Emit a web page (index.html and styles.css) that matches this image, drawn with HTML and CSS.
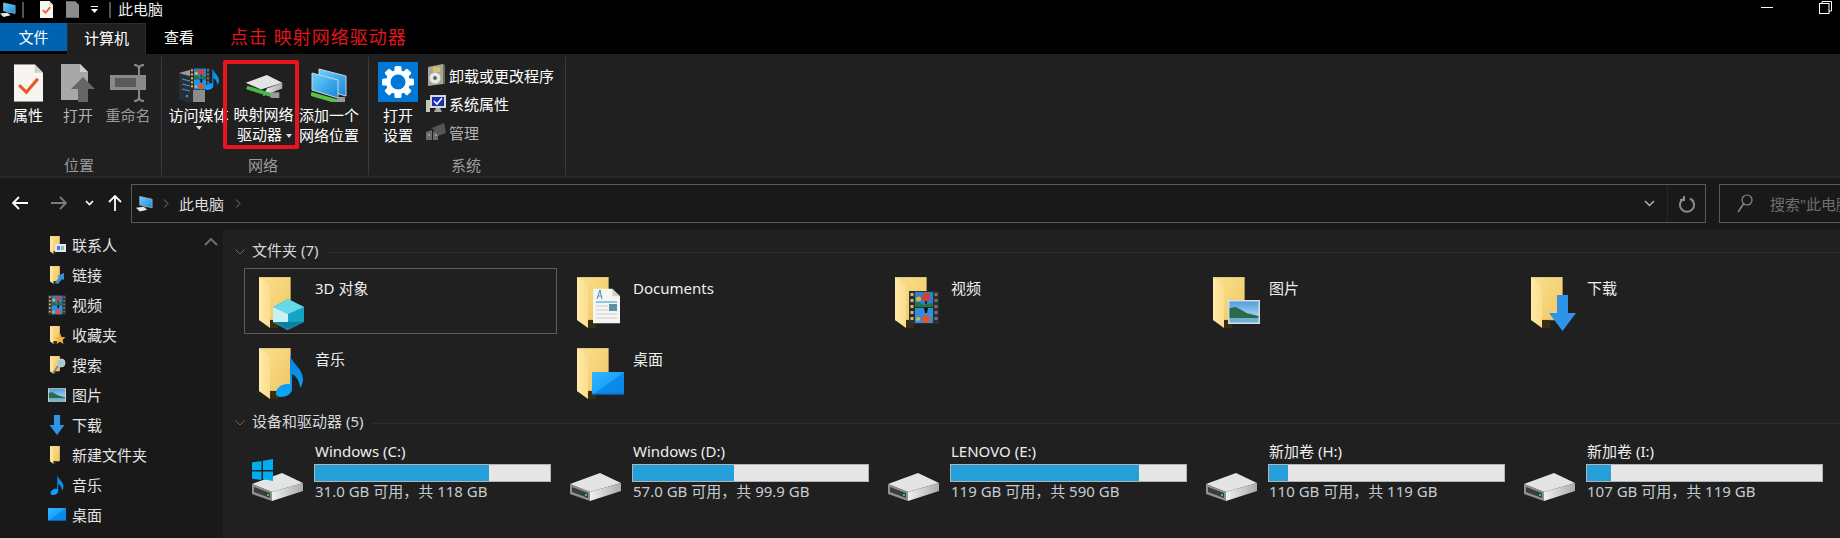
FILE: index.html
```html
<!DOCTYPE html>
<html lang="zh-CN">
<head>
<meta charset="utf-8">
<title>此电脑</title>
<link rel="stylesheet" href="styles.css">
</head>
<body>
<svg class="defs" aria-hidden="true">
  <defs>
    <linearGradient id="gBack" x1="0" x2="1" y1="0" y2="1"><stop offset="0" stop-color="#fbe08f"/><stop offset="1" stop-color="#efc765"/></linearGradient>
    <linearGradient id="gFlap" x1="0" x2="1"><stop offset="0" stop-color="#ffeaa8"/><stop offset="1" stop-color="#fbdd8c"/></linearGradient>
    <linearGradient id="gNote" x1="0" x2="0" y1="0" y2="1"><stop offset="0" stop-color="#0b7fd8"/><stop offset="1" stop-color="#0aa6ff"/></linearGradient>
    <linearGradient id="gSky" x1="0" x2="0" y1="0" y2="1"><stop offset="0" stop-color="#4d9fe0"/><stop offset="1" stop-color="#cfe7f7"/></linearGradient>
    <linearGradient id="gDesk" x1="0" x2="1" y1="0" y2="1"><stop offset="0" stop-color="#35b4ff"/><stop offset=".5" stop-color="#1ba4fb"/><stop offset=".51" stop-color="#0a8cec"/><stop offset="1" stop-color="#0a84e0"/></linearGradient>
    <linearGradient id="gScreen" x1="0" x2="1" y1="0" y2="1"><stop offset="0" stop-color="#6fd0ff"/><stop offset="1" stop-color="#1689d6"/></linearGradient>
    <linearGradient id="gSide" x1="0" x2="1"><stop offset="0" stop-color="#f0f0f0"/><stop offset="1" stop-color="#a9abad"/></linearGradient>

    <symbol id="folder" viewBox="0 0 32 51">
      <rect x="0" y="0" width="31.5" height="43" fill="url(#gBack)" stroke="#b89a5c" stroke-width=".6"/>
      <path d="M11 43h8v8h-8z" fill="#3a2c10"/>
      <path d="M0 0l11 8v43L0 43z" fill="url(#gFlap)"/>
    </symbol>

    <symbol id="drive" viewBox="0 0 52 28">
      <path d="M0 11L30 0l21 10-31 9z" fill="#e3e4e6"/>
      <path d="M0 11l20 8v9L0 21z" fill="#8f9092"/>
      <path d="M2 14l16 6v5L2 19z" fill="#3b3c3e"/>
      <path d="M20 19l31-9v8L20 28z" fill="url(#gSide)"/>
      <rect x="15" y="21" width="2" height="2" fill="#1fd655"/>
    </symbol>

    <symbol id="film" viewBox="0 0 30 33">
      <rect width="30" height="33" fill="#2f2f2f"/>
      <g fill="#d9b46a"><rect x="1.5" y="2" width="3" height="3"/><rect x="1.5" y="8" width="3" height="3"/><rect x="1.5" y="14" width="3" height="3"/><rect x="1.5" y="20" width="3" height="3"/><rect x="1.5" y="26" width="3" height="3"/></g>
      <g fill="#777"><rect x="25.5" y="2" width="3" height="3"/><rect x="25.5" y="8" width="3" height="3"/><rect x="25.5" y="14" width="3" height="3"/><rect x="25.5" y="20" width="3" height="3"/><rect x="25.5" y="26" width="3" height="3"/></g>
      <rect x="6" y="1" width="18" height="15" fill="#2f7fd0"/>
      <rect x="6" y="17" width="18" height="15" fill="#2f8fe0"/>
      <path d="M6 16v-4l4-1 4 3 10-2v4z" fill="#1d7a3a"/>
      <circle cx="17" cy="6" r="4" fill="#d8402c"/><rect x="16" y="10" width="2" height="3" fill="#222"/><circle cx="9.500" cy="8" r="2.500" fill="#e8b030"/>
      <circle cx="17" cy="28" r="4" fill="#e0562c"/><path d="M15 17h4l-1 5h-2z" fill="#111"/><circle cx="9" cy="28" r="2" fill="#e8b030"/>
    </symbol>

    <symbol id="pic" viewBox="0 0 32 24">
      <rect width="32" height="24" fill="#d8dde0"/>
      <rect x="1.5" y="1.5" width="29" height="21" fill="url(#gSky)"/>
      <path d="M1.5 16V8l6-1 6 3 5 3 12 3v2h-29z" fill="#2c6b4a"/>
      <rect x="1.5" y="18" width="29" height="4.5" fill="#6fb1d6"/>
    </symbol>

    <symbol id="note" viewBox="0 0 27 42">
      <path d="M14 0c1 7 13 14 13 24 0 3-1 6-3 9 0-7-4-12-8-14v15c0 5-6 8-11 8-3 0-5-1-5-4 0-5 6-9 11-9 1 0 2 0 3 .5z" fill="url(#gNote)"/>
    </symbol>

    <symbol id="arrowDown" viewBox="0 0 27 36">
      <path d="M8 0h11v18h8L13.500 36 0 18h8z" fill="#2f93e8"/>
    </symbol>

    <symbol id="deskp" viewBox="0 0 32 23">
      <rect width="32" height="23" fill="url(#gDesk)"/>
      <rect y="21.500" width="32" height="1.500" fill="#0660b0"/>
    </symbol>

    <symbol id="netpc" viewBox="0 0 20 18">
      <path d="M5 1l13 3v9L5 10z" fill="url(#gScreen)" stroke="#9fb4c4" stroke-width=".8"/>
      <path d="M1 13l8-1 4 3-8 2z" fill="#e8e8e8"/>
      <path d="M9 10l3 1v2l-3-1z" fill="#8a8a8a"/>
    </symbol>

    <symbol id="page" viewBox="0 0 28 36">
      <path d="M0 0h20l8 8v28H0z" fill="#f7f5ef"/>
      <path d="M20 0v8h8z" fill="#cfcfcf"/>
    </symbol>
  </defs>
</svg>

<div class="window">
  <header class="titlebar">
    <svg class="t-pc" width="18" height="16"><use href="#netpc"/></svg>
    <span class="t-sep"></span>
    <svg class="t-doc" width="15" height="17" viewBox="0 0 28 36"><use href="#page" width="28" height="36"/><path d="M6 19l6 6 10-12" fill="none" stroke="#e8562a" stroke-width="3.500"/></svg>
    <svg class="t-doc2" width="13" height="17" viewBox="0 0 28 36"><path d="M0 0h20l8 8v28H0z" fill="#8c8c8c"/></svg>
    <svg class="t-drop" width="9" height="8" viewBox="0 0 9 8"><path d="M1 0h7v1H1zM1 3h7L4.500 7z" fill="#fff"/></svg>
    <span class="t-sep t-sep2"></span>
    <span class="t-title">此电脑</span>
    <span class="t-controls">
      <i class="t-min"></i>
      <svg width="13" height="13" viewBox="0 0 13 13"><path d="M3 2V.5h9.500V10H10" fill="none" stroke="#fff"/><rect x=".5" y="2.500" width="9.500" height="10" fill="none" stroke="#fff"/></svg>
    </span>
  </header>

  <nav class="tabs">
    <span class="tab tab-file">文件</span>
    <span class="tab tab-active">计算机</span>
    <span class="tab tab-view">查看</span>
    <span class="tab-note">点击 映射网络驱动器</span>
  </nav>

  <section class="ribbon">
    <div class="group g-loc">
      <div class="g-body">
        <div class="rbtn w50">
          <svg class="ric" width="29" height="37" viewBox="0 0 28 36"><use href="#page" width="28" height="36"/><path d="M5 20l7 7 11-13" fill="none" stroke="#e8562a" stroke-width="3"/></svg>
          <span>属性</span>
        </div>
        <div class="rbtn w50 dim">
          <svg class="ric" width="34" height="38" viewBox="0 0 34 38"><path d="M0 0h19l8 8v28H0z" fill="#a8a8a8"/><path d="M19 0v8h8z" fill="#d0d0d0"/><path d="M22 13l12 12h-7v13H17V25h-7z" fill="#666"/></svg>
          <span>打开</span>
        </div>
        <div class="rbtn w50 dim2">
          <svg class="ric" width="36" height="38" viewBox="0 0 36 38"><rect y="11" width="36" height="15" fill="#8a8a8a"/><rect x="5" y="14" width="21" height="9" fill="#5a5a5a"/><path d="M24 1c3 0 5 1 5 4v28c0 3 2 4 5 4M34 1c-3 0-5 1-5 4" fill="none" stroke="#888" stroke-width="2"/><path d="M29 33c0 3-2 4-5 4" fill="none" stroke="#888" stroke-width="2"/></svg>
          <span>重命名</span>
        </div>
      </div>
      <div class="g-label">位置</div>
    </div>

    <div class="group g-net">
      <div class="g-body">
        <div class="rbtn w61">
          <svg class="ric" width="40" height="38" viewBox="0 0 40 38"><path d="M0 9l14-4 12 4v29H8l-8-3z" fill="#2a2d33"/><path d="M0 9l14-4 12 4-12 4z" fill="#9a9ca0"/><path d="M14 13l12-4v29H14z" fill="#8a8c90"/><path d="M3 15l8 2M3 20l8 2M3 25l8 2" stroke="#3aa0e0" stroke-width="1.200"/><circle cx="8" cy="32" r="1.200" fill="#3aa0e0"/><svg x="11" y="0" width="20" height="30"><use href="#film"/></svg><svg x="26" y="2" width="14" height="26"><use href="#note"/></svg></svg>
          <span>访问媒体</span>
          <i class="caret caret-down"></i>
        </div>
        <div class="rbtn w65 map">
          <svg class="ric ric-map" width="38" height="25" viewBox="0 0 38 25"><path d="M0 8L22 0l16 8-22 7z" fill="#e3e4e6"/><path d="M22 14l16-6v6l-20 8z" fill="url(#gSide)"/><path d="M2 12l14 3v4L2 15z" fill="#3b3c3e"/><path d="M1 13l26 8" stroke="#48b848" stroke-width="4"/><rect x="26" y="18" width="9" height="6" fill="#9a9a9a"/></svg>
          <span>映射网络</span>
          <span class="with-caret">驱动器<i class="caret caret-inline"></i></span>
          <i class="redbox"></i>
        </div>
        <div class="rbtn w64">
          <svg class="ric ric-add" width="36" height="34" viewBox="0 0 36 34"><path d="M8 1l27 7v20L8 20z" fill="url(#gScreen)" stroke="#c8d8e0"/><path d="M1 5l26 7v18L1 22z" fill="url(#gScreen)" stroke="#c8d8e0"/><path d="M0 26l28 8" stroke="#5cc04a" stroke-width="4"/><rect x="26" y="29" width="8" height="5" fill="#999"/></svg>
          <span>添加一个</span>
          <span>网络位置</span>
        </div>
      </div>
      <div class="g-label">网络</div>
    </div>

    <div class="group g-sys">
      <div class="g-body">
        <div class="rbtn w50 settings">
          <svg class="ric ric-set" width="40" height="40" viewBox="0 0 40 40">
            <rect width="40" height="40" fill="#0078d7"/>
            <g fill="#fff">
              <rect x="16.500" y="4" width="7" height="32" rx="1.500"/>
              <rect x="16.500" y="4" width="7" height="32" rx="1.500" transform="rotate(45 20 20)"/>
              <rect x="16.500" y="4" width="7" height="32" rx="1.500" transform="rotate(90 20 20)"/>
              <rect x="16.500" y="4" width="7" height="32" rx="1.500" transform="rotate(135 20 20)"/>
            </g>
            <circle cx="20" cy="20" r="9.500" fill="none" stroke="#fff" stroke-width="5"/>
            <circle cx="20" cy="20" r="7.500" fill="#0078d7"/>
          </svg>
          <span>打开</span>
          <span>设置</span>
        </div>
        <ul class="rlist">
          <li>
            <svg width="20" height="22" viewBox="0 0 20 22"><path d="M2 3l15-3v20L2 22z" fill="#a8a898"/><path d="M17 0l2 1v19l-2 0z" fill="#6a6a5e"/><rect x="7" y="3" width="7" height="5" fill="#d8c070"/><circle cx="9" cy="14" r="5.500" fill="#e8e8e8"/><circle cx="9" cy="14" r="2" fill="#666"/></svg>
            <span>卸载或更改程序</span>
          </li>
          <li>
            <svg width="20" height="18" viewBox="0 0 20 18"><rect y="5" width="4" height="12" fill="#c8c8b8"/><rect x="4" y="0" width="16" height="13" fill="#d8d8d8"/><rect x="6" y="2" width="12" height="9" fill="#1a2fb0"/><path d="M8 6l3 3 5-6" fill="none" stroke="#fff" stroke-width="1.600"/><path d="M10 13h4l2 4H8z" fill="#aaa"/></svg>
            <span>系统属性</span>
          </li>
          <li class="dim">
            <svg width="20" height="18" viewBox="0 0 20 18"><path d="M0 9l6-2v10H0zM7 9l5-2v10H7z" fill="#6a6a6a"/><path d="M6 5l12-5 2 10-8 3z" fill="#555"/><rect x="2" y="11" width="2" height="2" fill="#999"/><rect x="9" y="11" width="2" height="2" fill="#999"/></svg>
            <span>管理</span>
          </li>
        </ul>
      </div>
      <div class="g-label">系统</div>
    </div>
  </section>

  <section class="navbar">
    <div class="navbtns">
      <svg class="n-back" width="16" height="14" viewBox="0 0 16 14"><path d="M7 1L1 7l6 6M1 7h15" fill="none" stroke="#fff" stroke-width="1.800"/></svg>
      <svg class="n-fwd" width="16" height="14" viewBox="0 0 16 14"><path d="M9 1l6 6-6 6M15 7H0" fill="none" stroke="#7c7c7c" stroke-width="1.800"/></svg>
      <svg class="n-drop" width="9" height="6" viewBox="0 0 9 6"><path d="M1 1l3.500 3.500L8 1" fill="none" stroke="#fff" stroke-width="1.600"/></svg>
      <svg class="n-up" width="14" height="16" viewBox="0 0 14 16"><path d="M1 7l6-6 6 6M7 1v15" fill="none" stroke="#fff" stroke-width="1.800"/></svg>
    </div>
    <div class="addr">
      <svg class="a-pc" width="19" height="18"><use href="#netpc"/></svg>
      <svg class="a-chev" width="6" height="9" viewBox="0 0 6 9"><path d="M1 .5l4 4-4 4" fill="none" stroke="#7a7a7a"/></svg>
      <span class="a-text">此电脑</span>
      <svg class="a-chev a-chev2" width="6" height="9" viewBox="0 0 6 9"><path d="M1 .5l4 4-4 4" fill="none" stroke="#7a7a7a"/></svg>
      <svg class="a-drop" width="11" height="7" viewBox="0 0 11 7"><path d="M1 1l4.500 4.500L10 1" fill="none" stroke="#b0b0b0" stroke-width="1.500"/></svg>
      <span class="a-refresh"><svg width="16" height="18" viewBox="0 0 16 18"><path d="M5 3.500a7 7 0 1 0 6 0M5 1v4H1" fill="none" stroke="#8a8a8a" stroke-width="2"/></svg></span>
    </div>
    <div class="search">
      <svg width="16" height="19" viewBox="0 0 16 19"><circle cx="10" cy="6" r="5" fill="none" stroke="#8a8a8a" stroke-width="1.200"/><path d="M6.500 10L1 18" stroke="#8a8a8a" stroke-width="1.400"/></svg>
      <span>搜索"此电脑"</span>
    </div>
  </section>

  <main class="main">
    <aside class="side">
      <svg class="side-up" width="14" height="8" viewBox="0 0 14 8"><path d="M1 7l6-6 6 6" fill="none" stroke="#6e6e6e" stroke-width="2"/></svg>
      <ul class="side-list">
        <li><svg width="18" height="20" viewBox="0 0 18 20"><svg x="2" y="1" width="10" height="18" preserveAspectRatio="none" viewBox="0 0 32 51"><use href="#folder" width="32" height="51"/></svg><rect x="7" y="9" width="11" height="8" fill="#dfe8f0"/><rect x="9" y="11" width="3" height="4" fill="#4a80c0"/><path d="M13 12h3M13 14h3" stroke="#4a80c0"/></svg><span>联系人</span></li>
        <li><svg width="18" height="20" viewBox="0 0 18 20"><svg x="2" y="1" width="10" height="18" preserveAspectRatio="none" viewBox="0 0 32 51"><use href="#folder" width="32" height="51"/></svg><path d="M7 18l4-6-2-1 7-3v7l-2-1-4 5z" fill="#3a90d8"/></svg><span>链接</span></li>
        <li><svg width="18" height="20" viewBox="0 0 18 20"><use href="#film" width="18" height="20"/></svg><span>视频</span></li>
        <li><svg width="18" height="20" viewBox="0 0 18 20"><svg x="2" y="1" width="10" height="18" preserveAspectRatio="none" viewBox="0 0 32 51"><use href="#folder" width="32" height="51"/></svg><path d="M12 8l1.500 4 4 .3-3 2.700 1 4-3.500-2.200-3.500 2.200 1-4-3-2.700 4-.3z" fill="#f4b040"/></svg><span>收藏夹</span></li>
        <li><svg width="18" height="20" viewBox="0 0 18 20"><svg x="2" y="1" width="10" height="18" preserveAspectRatio="none" viewBox="0 0 32 51"><use href="#folder" width="32" height="51"/></svg><circle cx="13" cy="8" r="4" fill="#a8c8d8" stroke="#d0d0d0"/><path d="M10 11l-5 7" stroke="#888" stroke-width="2"/></svg><span>搜索</span></li>
        <li><svg width="18" height="20" viewBox="0 0 18 20"><use href="#pic" y="2" width="18" height="16"/></svg><span>图片</span></li>
        <li><svg width="18" height="20" viewBox="0 0 18 20"><use href="#arrowDown" width="18" height="20"/></svg><span>下载</span></li>
        <li><svg width="18" height="20" viewBox="0 0 18 20"><svg x="2" y="1" width="10" height="18" preserveAspectRatio="none" viewBox="0 0 32 51"><use href="#folder" width="32" height="51"/></svg></svg><span>新建文件夹</span></li>
        <li><svg width="18" height="20" viewBox="0 0 18 20"><use href="#note" width="18" height="20"/></svg><span>音乐</span></li>
        <li><svg width="18" height="20" viewBox="0 0 18 20"><use href="#deskp" y="2" width="18" height="15"/></svg><span>桌面</span></li>
      </ul>
    </aside>

    <div class="content">
      <h2 class="sec-head">
        <svg width="10" height="6" viewBox="0 0 10 6"><path d="M.5.500L5 5 9.500.5" fill="none" stroke="#6a6a6a"/></svg>
        <span>文件夹 (7)</span><i></i>
      </h2>
      <div class="tiles">
        <div class="tile selected">
          <svg class="ticon" width="60" height="56" viewBox="0 0 60 56"><use href="#folder" width="32" height="51"/><path d="M14 30l15-8 16 8v15l-16 8-15-8z" fill="#15a4c6"/><path d="M14 30l15-8 16 8-16 7z" fill="#66d8e6"/><path d="M14 30l15 7v16l-15-8z" fill="#c9f0f2"/><path d="M29 45l16-.500-16 8.500-15-8z" fill="#0f7f9e"/></svg>
          <span>3D 对象</span>
        </div>
        <div class="tile">
          <svg class="ticon" width="60" height="56" viewBox="0 0 60 56"><use href="#folder" width="32" height="51"/><use href="#page" x="16" y="11" width="27" height="36"/><path d="M19 25h21" stroke="#6ab7e8" stroke-width="1.500"/><path d="M19 29h12M19 33h12M19 37h21M19 41h21" stroke="#c8d0d8"/><path d="M20 22l3-9 2 9M21 19h3" fill="none" stroke="#3a8fd8"/><rect x="32" y="27" width="8" height="7" fill="#5a90a8"/></svg>
          <span>Documents</span>
        </div>
        <div class="tile">
          <svg class="ticon" width="60" height="56" viewBox="0 0 60 56"><use href="#folder" width="32" height="51"/><use href="#film" x="14" y="14" width="30" height="33"/></svg>
          <span>视频</span>
        </div>
        <div class="tile">
          <svg class="ticon" width="60" height="56" viewBox="0 0 60 56"><use href="#folder" width="32" height="51"/><use href="#pic" x="15" y="23" width="32" height="24"/></svg>
          <span>图片</span>
        </div>
        <div class="tile">
          <svg class="ticon" width="60" height="56" viewBox="0 0 60 56"><use href="#folder" width="32" height="51"/><use href="#arrowDown" x="18" y="18" width="27" height="36"/></svg>
          <span>下载</span>
        </div>
        <div class="tile">
          <svg class="ticon" width="60" height="56" viewBox="0 0 60 56"><use href="#folder" width="32" height="51"/><use href="#note" x="17" y="7" width="27" height="42"/></svg>
          <span>音乐</span>
        </div>
        <div class="tile">
          <svg class="ticon" width="60" height="56" viewBox="0 0 60 56"><use href="#folder" width="32" height="51"/><use href="#deskp" x="15" y="24" width="32" height="23"/></svg>
          <span>桌面</span>
        </div>
      </div>

      <h2 class="sec-head sec-head2">
        <svg width="10" height="6" viewBox="0 0 10 6"><path d="M.5.500L5 5 9.500.5" fill="none" stroke="#6a6a6a"/></svg>
        <span>设备和驱动器 (5)</span><i></i>
      </h2>
      <div class="drives">
        <div class="dtile">
          <svg class="dicon" width="52" height="42" viewBox="0 0 52 42"><use href="#drive" y="14" width="52" height="28"/><path d="M0 3.500L9.500 2v9H0zM11 1.800L21 0v11H11zM0 12.500h9.500V21L0 19.700zM11 12.500h10V22l-10-1.700z" fill="#00adef"/></svg>
          <div class="dinfo"><div class="dname">Windows (C:)</div><div class="bar"><i class="fill" style="width:74%"></i></div><div class="dsub">31.0 GB 可用，共 118 GB</div></div>
        </div>
        <div class="dtile">
          <svg class="dicon" width="52" height="42" viewBox="0 0 52 42"><use href="#drive" y="14" width="52" height="28"/></svg>
          <div class="dinfo"><div class="dname">Windows (D:)</div><div class="bar"><i class="fill" style="width:43%"></i></div><div class="dsub">57.0 GB 可用，共 99.9 GB</div></div>
        </div>
        <div class="dtile">
          <svg class="dicon" width="52" height="42" viewBox="0 0 52 42"><use href="#drive" y="14" width="52" height="28"/></svg>
          <div class="dinfo"><div class="dname">LENOVO (E:)</div><div class="bar"><i class="fill" style="width:80%"></i></div><div class="dsub">119 GB 可用，共 590 GB</div></div>
        </div>
        <div class="dtile">
          <svg class="dicon" width="52" height="42" viewBox="0 0 52 42"><use href="#drive" y="14" width="52" height="28"/></svg>
          <div class="dinfo"><div class="dname">新加卷 (H:)</div><div class="bar"><i class="fill" style="width:8%"></i></div><div class="dsub">110 GB 可用，共 119 GB</div></div>
        </div>
        <div class="dtile">
          <svg class="dicon" width="52" height="42" viewBox="0 0 52 42"><use href="#drive" y="14" width="52" height="28"/></svg>
          <div class="dinfo"><div class="dname">新加卷 (I:)</div><div class="bar"><i class="fill" style="width:10%"></i></div><div class="dsub">107 GB 可用，共 119 GB</div></div>
        </div>
      </div>
    </div>
  </main>
</div>
</body>
</html>
```

FILE: styles.css
```css
* { box-sizing: border-box; }
html, body { margin: 0; padding: 0; background: #000; }
body {
  width: 1840px; height: 538px; overflow: hidden;
  font-family: "Noto Sans", "Noto Sans CJK SC", sans-serif;
  font-size: 15px; color: #fff;
}
svg { display: block; flex: none; }
.defs { position: absolute; width: 0; height: 0; }
.window { display: flex; flex-direction: column; width: 1840px; height: 538px; }

/* title bar */
.titlebar { display: flex; align-items: center; height: 23px; background: #000; padding-bottom: 4px; flex: none; }
.t-pc { margin-left: -1px; }
.t-sep { width: 2px; height: 16px; background: #555; margin-left: 5px; }
.t-doc { margin-left: 15px; }
.t-doc2 { margin-left: 12px; }
.t-drop { margin-left: 11px; }
.t-sep2 { margin-left: 10px; }
.t-title { margin-left: 7px; line-height: 19px; color: #eee; }
.t-controls { margin-left: auto; display: flex; align-items: flex-start; height: 19px; padding-top: 1px; }
.t-controls svg { margin-left: 46px; margin-right: 8px; }
.t-min { display: block; width: 12px; height: 1px; background: #fff; margin-top: 6px; }

/* tabs */
.tabs { display: flex; height: 31px; background: #000; flex: none; }
.tab { display: flex; align-items: center; justify-content: center; line-height: 28px; }
.tab-file { width: 67px; height: 28px; background: #0063b1; }
.tab-active { width: 79px; height: 31px; padding-bottom: 3px; background: #1f1f1f; border: 1px solid #2c2c2c; border-bottom: 0; }
.tab-view { width: 66px; height: 28px; }
.tab-note { color: #e0161f; font-size: 18px; letter-spacing: 1px; margin-left: 18px; line-height: 28px; }

/* ribbon */
.ribbon { display: flex; height: 124px; background: #202020; border-bottom: 2px solid #2a2a2a; flex: none; }
.group { display: flex; flex-direction: column; border-right: 1px solid #3a3a3a; height: 118px; margin-top: 3px; }
.g-loc { width: 162px; padding-left: 3px; }
.g-net { width: 207px; padding-left: 6px; }
.g-sys { width: 197px; padding-left: 4px; }
.g-body { display: flex; height: 96px; }
.g-label { text-align: center; color: #9c9c9c; line-height: 20px; margin-top: 2px; }
.g-loc .g-label { margin-left: -6px; }
.g-net .g-label { margin-left: -10px; }
.g-sys .g-label { margin-left: -6px; }
.rbtn { position: relative; display: flex; flex-direction: column; align-items: center; line-height: 20px; white-space: nowrap; }
.rbtn .ric { height: 38px; margin-top: 7px; margin-bottom: 3px; }
.rbtn .ric-map { height: 24px; margin-top: 18px; margin-bottom: 5px; }
.rbtn .ric-add { height: 34px; margin-top: 11px; margin-bottom: 3px; }
.rbtn .ric-set { height: 40px; margin-top: 5px; margin-bottom: 3px; }
.w50 { width: 50px; }
.w61 { width: 61px; }
.w64 { width: 64px; }
.w65 { width: 65px; }
.map { margin-left: 2px; margin-right: 1px; }
.dim { color: #b4b4b4; }
.dim2 { color: #9a9a9a; }
.caret { display: block; width: 0; height: 0; border: 3.500px solid transparent; border-top: 4px solid #ddd; border-bottom: 0; }
.caret-down { margin-top: 1px; }
.caret-inline { display: inline-block; margin-left: 4px; vertical-align: middle; }
.with-caret { padding-left: 2px; }
.redbox { position: absolute; left: -8px; top: 3px; width: 76px; height: 89px; border: 4px solid #e8141e; border-radius: 2px; }
.settings { width: 50px; }
.rlist { list-style: none; margin: 0; padding: 4px 0 0 3px; display: flex; flex-direction: column; }
.rlist li { display: flex; align-items: center; height: 28.5px; gap: 3px; white-space: nowrap; }

/* nav */
.navbar { display: flex; height: 52px; background: #191919; padding-top: 6px; flex: none; }
.navbtns { display: flex; align-items: center; width: 131px; height: 38px; flex: none; }
.n-back { margin-left: 12px; }
.n-fwd { margin-left: 23px; }
.n-drop { margin-left: 18px; }
.n-up { margin-left: 14px; }
.addr { display: flex; align-items: center; flex: none; width: 1575px; height: 39px; border: 1px solid #5a5a5a; background: #191919; }
.a-pc { margin-left: 3px; }
.a-chev { margin-left: 9px; }
.a-text { margin-left: 10px; color: #ddd; }
.a-chev2 { margin-left: 11px; }
.a-drop { margin-left: auto; margin-right: 12px; }
.a-refresh { display: flex; align-items: center; justify-content: center; width: 38px; height: 100%; border-left: 1px solid #262626; }
.search { display: flex; align-items: center; flex: none; width: 200px; height: 39px; margin-left: 13px; border: 1px solid #5a5a5a; padding-left: 17px; color: #6e6e6e; white-space: nowrap; }
.search span { margin-left: 17px; }

/* main */
.main { display: flex; flex: 1; min-height: 0; }
.side { position: relative; width: 223px; background: #191919; flex: none; }
.side-up { position: absolute; left: 204px; top: 8px; }
.side-list { list-style: none; margin: 0; padding: 0 0 0 48px; }
.side-list li { display: flex; align-items: center; height: 30px; gap: 6px; color: #e4e4e4; }
.side-list span { margin-top: -2px; }
.content { flex: 1; background: #202020; padding: 10px 0 0 12px; min-width: 0; }
.sec-head { display: flex; align-items: center; height: 24px; margin: 0; font-size: 15px; font-weight: 400; color: #d8d8d8; }
.sec-head2 { margin-top: 6px; }
.sec-head svg { margin-right: 7px; }
.sec-head span { margin-top: -5px; }
.sec-head i { flex: 1; height: 1px; background: #2c2c2c; margin-left: 8px; }
.tiles { display: grid; grid-template-columns: repeat(5, 313px); grid-auto-rows: 66px; gap: 5px; margin: 4px 0 0 9px; }
.tile { display: flex; padding: 9px 0 0 15px; line-height: 20px; color: #eee; }
.tile span { margin-left: -4px; margin-top: 1px; }
.tile.selected { outline: 1px solid #5c5c5c; outline-offset: -1px; }
.drives { display: grid; grid-template-columns: repeat(5, 313px); column-gap: 5px; margin: 7px 0 0 9px; }
.dtile { display: flex; }
.dicon { margin: 17px 10px 0 8px; }
.dinfo { width: 237px; flex: none; }
.dname { height: 22px; line-height: 18px; padding-left: 1px; color: #eee; }
.bar { height: 18px; border: 1px solid #b4b4b4; background: #e6e6e6; }
.fill { display: block; height: 100%; background: #26a0da; }
.dsub { height: 22px; line-height: 18px; padding-left: 1px; color: #c4ccd2; white-space: nowrap; }
```
